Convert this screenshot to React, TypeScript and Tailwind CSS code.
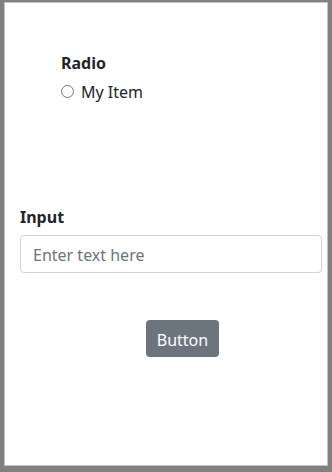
export default function App() {
  return (
    <div
      className="h-[472px] bg-[#808080] pt-[2px] px-[4px] pb-[6px] text-[#212529]"
      style={{ fontFamily: '"Noto Sans", "Open Sans", sans-serif' }}
    >
      <div className="h-full border border-[#c4c4c4] bg-white flex flex-col">
        {/* Radio group */}
        <div className="ml-[56px] mt-[48px] flex flex-col">
          <div className="text-[16px] font-bold leading-[24px]">Radio</div>
          <label className="flex items-center gap-[7px] mt-[5px] text-[16px] leading-[24px]">
            <span className="w-[13px] h-[13px] rounded-full border border-[#767676] bg-white -mt-[2px]" />
            <span>My Item</span>
          </label>
        </div>

        {/* Input */}
        <div className="ml-[15px] mr-[5px] mt-[101px] flex flex-col">
          <div className="text-[16px] font-bold leading-[24px]">Input</div>
          <div className="mt-[6px] h-[38px] rounded-[4px] border border-[#ced4da] px-[12px] pt-[2px] flex items-center text-[16px] text-[#6c757d]">
            Enter text here
          </div>
        </div>

        {/* Button */}
        <div className="ml-[141px] mt-[47px]">
          <button className="w-[73px] h-[37px] pt-[2px] rounded-[4px] bg-[#6c757d] text-white text-[16px]">
            Button
          </button>
        </div>
      </div>
    </div>
  );
}
